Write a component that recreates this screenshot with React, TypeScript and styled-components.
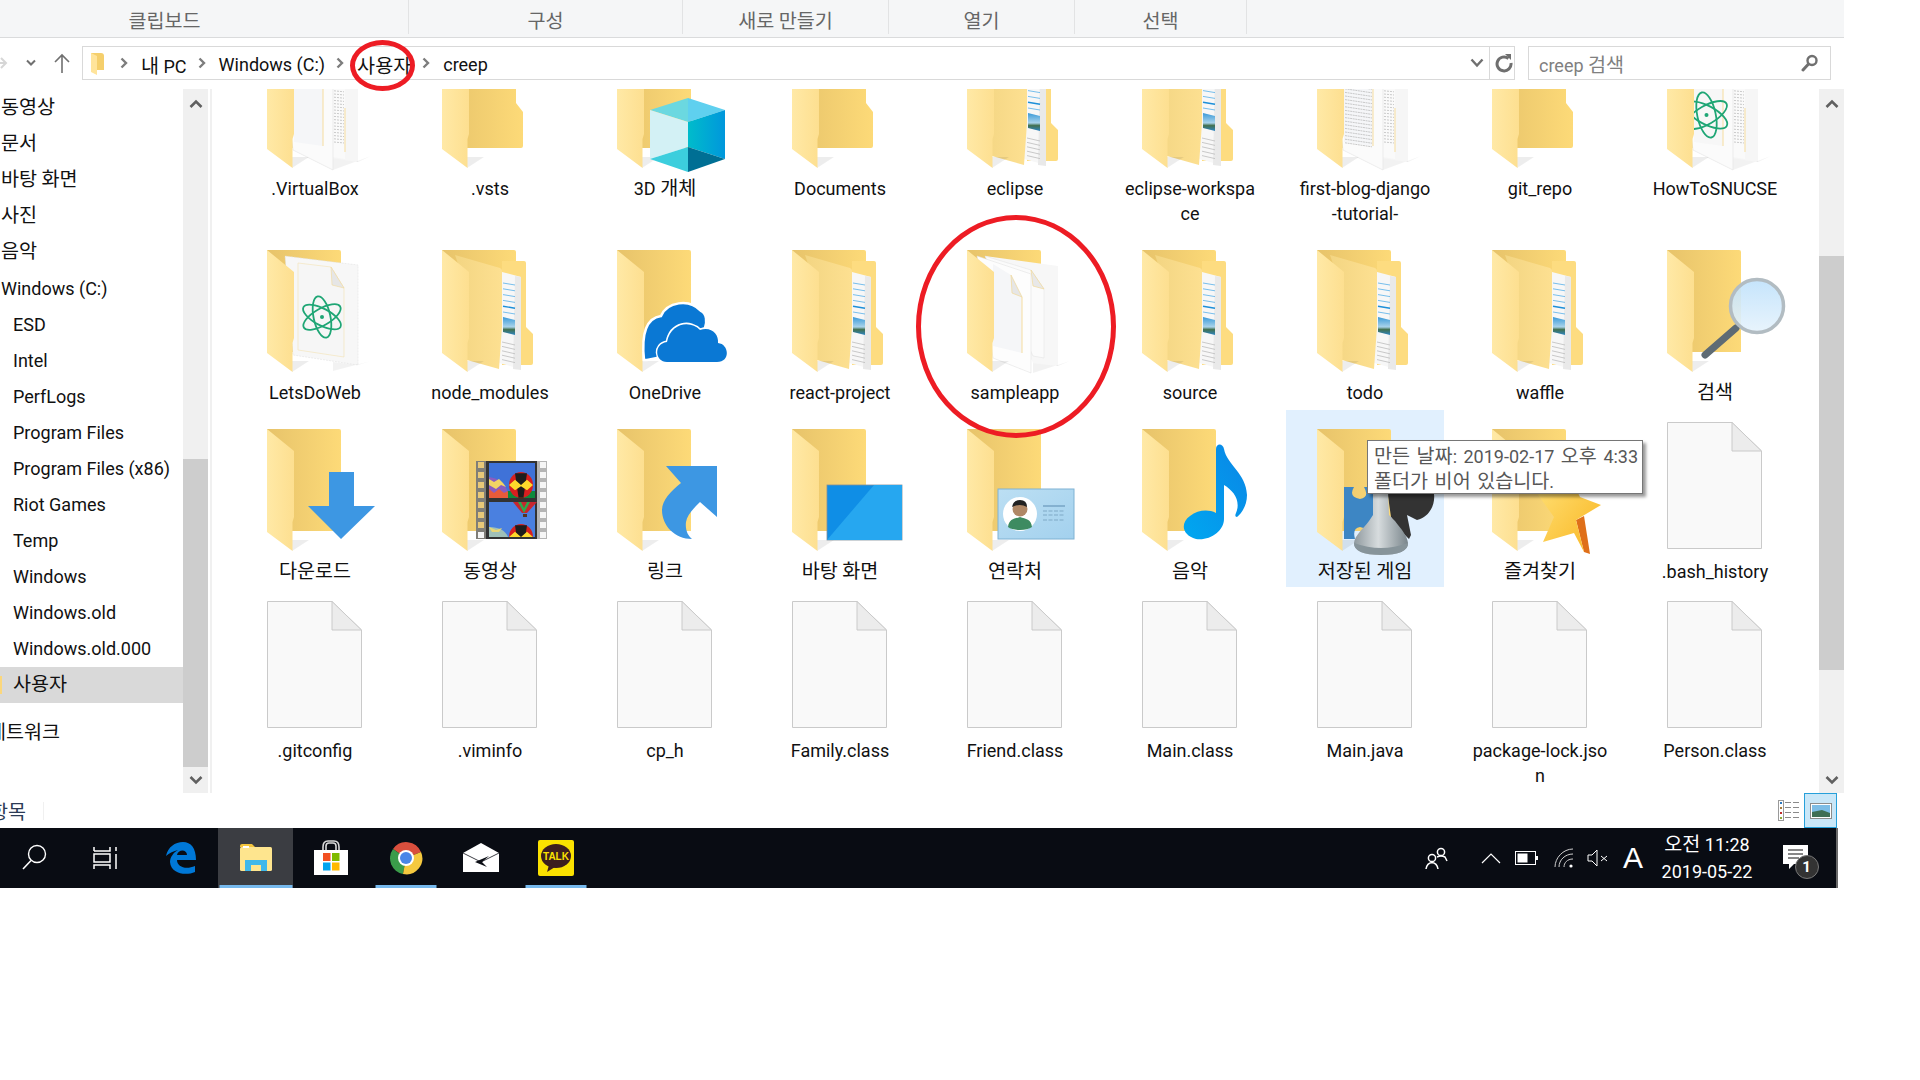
import React from 'react';
import styled, { createGlobalStyle } from 'styled-components';

const GlobalStyle = createGlobalStyle`
	html, body {
		margin: 0;
		padding: 0;
		background: #fff;
		overflow: hidden;
	}
	* {
		box-sizing: border-box;
	}
`;

const FONT = `Roboto, "Noto Sans CJK KR", sans-serif`;

// hangul runs a bit bigger than the latin, like the system font does
const T = ({ children }: { children: string }) => (
	<>
		{children.split(/([\uac00-\ud7a3]+)/).map((part, i) => (i % 2 ? <Ko key={i}>{part}</Ko> : part))}
	</>
);

// folder art, drawn in px relative to the folder's top left corner
const FolderBack = ({ notch }: { notch?: boolean }) =>
	notch ? (
		<path d='M0 0H72Q74 0 74 2V57L81 66V100Q81 102 79 102H0Z' fill='url(#folderBack)' />
	) : (
		<path d='M0 0H72Q74 0 74 2V102H0Z' fill='url(#folderBack)' />
	);

const FolderFront = () => (
	<>
		<path d='M25 122L42 111H25Z' fill='#000' opacity='0.07' />
		<path d='M0 0L27 22V88L25.5 93V122L0 103Z' fill='url(#folderFront)' />
	</>
);

const lines = (n: number, y: number, step: number) => Array.from({ length: n }, (_, i) => y + i * step);

const Atom = ({ x, y, r = 21 }: { x: number; y: number; r?: number }) => (
	<g transform={`translate(${x} ${y})`} fill='none' stroke='#1fa675' strokeWidth='1.8'>
		<ellipse rx={r} ry={r * 0.4} transform='rotate(28)' />
		<ellipse rx={r} ry={r * 0.4} transform='rotate(78)' />
		<ellipse rx={r} ry={r * 0.4} transform='rotate(-30)' />
		<circle r='2' fill='#1fa675' stroke='none' />
	</g>
);

const SheetStack = ({ textual, atom }: { textual?: boolean; atom?: boolean }) => (
	<>
		<path d='M18 6L91 16V116L66 112Z' fill='#f6f6f6' />
		<path d='M91 116L66 112V124L104 110Z' fill='#000' opacity='0.05' />
		<path d='M66 12L78 16V113L66 111Z' fill='#fafafa' />
		{lines(26, 16, 3.2).map((y) => (
			<line key={y} x1='67' x2='77' y1={y} y2={y + 1} stroke='#bdbdbd' strokeWidth='0.8' strokeDasharray='2 1' />
		))}
		<line x1='78' x2='78' y1='62' y2='106' stroke='#f6dd9f' />
		<path d='M14 4L66 22V124L26 104Z' fill='#fbfbfb' stroke='#e3e3e3' strokeWidth='0.6' />
		<path d='M27 8L56 16V100L27 96Z' fill={atom ? '#f7f7f7' : '#f5f6f8'} />
		{textual &&
			lines(24, 14, 3.6).map((y) => (
				<line key={y} x1='28' x2='55' y1={y} y2={y + 4} stroke='#b5b5b5' strokeWidth='0.7' strokeDasharray='2 0.6' />
			))}
		<line x1='56' x2='56' y1='16' y2='100' stroke='#f6dd9f' />
		{atom && <Atom x={39.5} y={69} r={23} />}
	</>
);

const NodeSheet = () => (
	<>
		<path d='M60 11H82Q84 11 84 13V77L91 84V113Q91 115 89 115H60Z' fill='#fddc80' />
		<path d='M60 22L79 27V119L57 113Z' fill='#f7f7f7' />
		<path d='M71 119L79 120V27L73 26Z' fill='#e9e9e9' />
		{lines(6, 33, 5.8).map((y, i) => (
			<line key={y} x1='61' x2='73' y1={y} y2={y + 2} stroke={i === 4 ? '#1d8fd8' : '#69b8ea'} strokeWidth={i === 4 ? 1.4 : 0.9} />
		))}
		<path d='M61 67L73 70V85L61 82Z' fill='url(#landscape)' />
		{lines(5, 92, 4.4).map((y) => (
			<line key={y} x1='60' x2='73' y1={y} y2={y + 3} stroke='#bcbcbc' strokeWidth='0.8' />
		))}
		<path d='M13 5L58 18Q60 19 60 21V77L57 119L25 110V40Z' fill='url(#folderMid)' />
	</>
);

const TwinSheets = () => (
	<>
		<path d='M18 6L91 16V116L66 113Z' fill='#f7f7f7' />
		<path d='M91 116L66 113V123L103 111Z' fill='#000' opacity='0.05' />
		<path d='M18 6L64 20L77 39V108L66 106Z' fill='#fbfbfb' stroke='#e0e0e0' strokeWidth='0.5' />
		<path d='M64 20L77 39L66 36Z' fill='#e8e8e8' stroke='#f1d898' strokeWidth='0.7' />
		<path d='M10 6L64 24V123L26 108Z' fill='#fdfdfd' stroke='#dedede' strokeWidth='0.5' />
		<path d='M26 14L44 25L55 47V103L26 96Z' fill='#f5f6f8' />
		<path d='M44 25L55 47L45 43Z' fill='#e6e6e6' stroke='#f1d898' strokeWidth='0.7' />
		<line x1='55' x2='55' y1='47' y2='103' stroke='#f6dd9f' />
	</>
);

const AtomSheet = () => (
	<>
		<path d='M18 6L91 15V115L26 105Z' fill='#f7f7f7' stroke='#dcdcdc' strokeWidth='0.5' strokeDasharray='2 1' />
		<path d='M91 115L66 112V121L104 111Z' fill='#000' opacity='0.05' />
		<path d='M31 13L64 17L77 38V107L31 100Z' fill='#f6f6f6' stroke='#f3e2b3' strokeWidth='0.6' />
		<path d='M64 17L77 38L65 35Z' fill='#e6e6e6' stroke='#f1d898' strokeWidth='0.6' />
		<Atom x={55} y={67} />
	</>
);

const Cube = () => (
	<>
		<path d='M33 64L71 52V76Z' fill='#6bd8e0' />
		<path d='M71 52L108 64L71 76Z' fill='#5fd0ef' />
		<path d='M33 64L71 76V101L33 113Z' fill='#d3f1f5' />
		<path d='M33 113L71 101V126Z' fill='#3ccedd' />
		<path d='M71 76L108 64V113L71 101Z' fill='url(#cubeSide)' />
		<path d='M71 101L108 113L71 126Z' fill='#006f94' />
	</>
);

const Clouds = () => (
	<>
		<path
			d='M27 110C24 82 30 68 44 66C50 52 72 48 84 61C90 64 90 72 88 78L60 104L30 110Z'
			fill='#0a78d4'
			stroke='#fff'
			strokeWidth='2.5'
		/>
		<path
			d='M50 112C38 112 36 94 50 92C54 72 74 70 83 80C94 76 102 84 101 93C112 94 114 112 100 112Z'
			fill='#0a78d4'
			stroke='#fff'
			strokeWidth='3'
			paintOrder='stroke'
		/>
	</>
);

const Balloon = ({ x, y, rx, ry }: { x: number; y: number; rx: number; ry: number }) => (
	<g transform={`translate(${x} ${y})`}>
		<ellipse rx={rx} ry={ry} fill='#d71f1f' />
		<path d={`M${-rx * 0.5} ${-ry * 0.9}L${-rx * 0.2} ${ry}H${rx * 0.2}L${rx * 0.5} ${-ry * 0.9}Z`} fill='#1d1d1d' />
		<path d={`M${-rx} 0L${-rx * 0.5} ${-ry * 0.4}L0 0L${rx * 0.5} ${-ry * 0.4}L${rx} 0L${rx * 0.5} ${ry * 0.4}L0 ${ry * 0.1}L${-rx * 0.5} ${ry * 0.4}Z`} fill='#fcd92b' />
	</g>
);

const Film = () => (
	<>
		<rect x='34' y='32' width='10' height='78' fill='#807e78' />
		<rect x='95' y='32' width='10' height='78' fill='#b5b5b5' />
		{lines(8, 33, 10).map((y, i) => (
			<React.Fragment key={y}>
				<rect x='36' y={y} width='6' height='6' fill={i === 7 ? '#f4f4f4' : '#e8c878'} />
				<rect x='98' y={y} width='6' height='6' fill='#f6f6f6' />
			</React.Fragment>
		))}
		<rect x='44' y='32' width='51' height='78' fill='#333' />
		<rect x='47' y='34' width='46' height='35' fill='#3f72d8' />
		<rect x='47' y='73' width='46' height='35' fill='#4a80e0' />
		<rect x='47' y='62' width='46' height='7' fill='#0d8a3c' />
		<path d='M47 48Q62 50 66 64V69H47Z' fill='#8a5cc0' />
		<path d='M47 50L52 53L57 50L61 54L64 58L59 56L54 60L47 56Z' fill='#f2d465' />
		<path d='M47 60L52 64L57 60L62 64L66 62V69H47Z' fill='#e85b3a' />
		<Balloon x={79} y={56} rx={12} ry={13} />
		<rect x='77' y='68' width='4' height='2' fill='#4a2a1a' />
		<path d='M71 73H95L85 84H80Z' fill='#c7262e' />
		<path d='M76 73L82 84L88 73L85 73L82 79L79 73Z' fill='#2da84c' />
		<rect x='81' y='85' width='4' height='3' fill='#5a3220' />
		<clipPath id='filmLower'>
			<rect x='47' y='73' width='46' height='35' />
		</clipPath>
		<g clipPath='url(#filmLower)'>
			<Balloon x={79} y={108} rx={12} ry={13} />
			<path d='M47 98Q62 98 66 108H47Z' fill='#9fc0b8' />
			<path d='M47 98L54 101L60 99L57 103L50 103Z' fill='#e8d676' />
		</g>
	</>
);

const Shortcut = () => (
	<path
		d='M49 37H100V88L83 73C76 80 70 86 69 93C68 101 71 107 75 110C58 110 45 97 45 81C45 71 54 62 64 54Z'
		fill='#3d97e3'
	/>
);

const Desktop = () => (
	<>
		<rect x='35' y='56' width='75' height='55' fill='#0f8ee6' stroke='#7f8e99' strokeWidth='0.8' />
		<path d='M35 111L82 56H110V111Z' fill='#26a7f0' />
	</>
);

const Contact = () => (
	<>
		<rect x='31' y='60' width='76' height='50' fill='url(#cardFill)' stroke='#7fb2d3' />
		<circle cx='53' cy='85' r='17' fill='#fff' />
		<path d='M41 98C42 90 47 90 53 88C59 90 64 90 65 98C60 102 46 102 41 98Z' fill='#3d8b61' />
		<circle cx='53' cy='80' r='7.5' fill='#b08866' />
		<path d='M45 78Q46 71 53 71Q60 71 60 78Q53 74 45 78Z' fill='#222' />
		<line x1='76' x2='98' y1='77' y2='77' stroke='#6e9dbe' strokeWidth='1.3' />
		{[82, 86, 91].map((y) => (
			<line key={y} x1='76' x2='98' y1={y} y2={y} stroke='#7fa9c6' strokeDasharray='4 1.5' />
		))}
	</>
);

const Note = () => (
	<path
		d='M74 20C74 14 81 14 82 20C85 36 104 44 105 66C105 76 100 84 95 88C93 88 93 86 94 84C99 72 92 62 82 56V90C82 102 68 112 54 110C40 106 38 94 48 87C56 81 66 80 74 84Z'
		fill='url(#noteFill)'
	/>
);

const Games = () => (
	<>
		<path
			d='M27 58H37Q31 68 43 70Q53 68 47 58H70V110H50Q53 100 43 98Q35 99 38 110H27Z'
			fill='#3d86c4'
		/>
		<path d='M70 60H116C120 72 114 88 100 91L90 86L94 106L92 110L82 100L74 88Z' fill='#333' />
		<path
			d='M56 62H71L72 86L78 92C84 100 90 106 91 114Q91 126 64 126Q37 126 37 114C38 106 46 100 52 92L56 86Z'
			fill='url(#pawn)'
		/>
		<path d='M37 114Q64 124 91 114Q91 126 64 126Q37 126 37 114Z' fill='#87949a' />
	</>
);

const Star = () => (
	<>
		<path d='M84 91L92 87L98 125L92 123Z' fill='#df6f19' />
		<path d='M46 66L76 44L88 68L109 76L84 91L92 123L82 104L51 113L62 88Z' fill='url(#starFill)' />
	</>
);

const Magnifier = () => (
	<>
		<line x1='69' y1='78' x2='38' y2='105' stroke='#5e6b74' strokeWidth='7' strokeLinecap='round' />
		<circle cx='90' cy='56' r='26.5' fill='url(#glassFill)' fillOpacity='0.9' stroke='#b2bcc2' strokeWidth='3.5' />
	</>
);

type FolderKind =
	| 'plain'
	| 'vbox'
	| 'text'
	| 'howto'
	| 'node'
	| 'atom'
	| 'twin'
	| 'cube'
	| 'cloud'
	| 'down'
	| 'film'
	| 'link'
	| 'desktop'
	| 'contact'
	| 'note'
	| 'games'
	| 'star'
	| 'search';

const behind: Partial<Record<FolderKind, React.ReactNode>> = {
	vbox: <SheetStack />,
	text: <SheetStack textual />,
	howto: <SheetStack atom />,
	node: <NodeSheet />,
	atom: <AtomSheet />,
	twin: <TwinSheets />,
};

const over: Partial<Record<FolderKind, React.ReactNode>> = {
	cube: <Cube />,
	cloud: <Clouds />,
	down: <path d='M62 43H87V77H108L74 110L41 77H62Z' fill='#3d97e3' />,
	film: <Film />,
	link: <Shortcut />,
	desktop: <Desktop />,
	contact: <Contact />,
	note: <Note />,
	games: <Games />,
	star: <Star />,
	search: <Magnifier />,
};

const FolderIcon = ({ kind }: { kind: FolderKind }) => (
	<IconSvg viewBox='0 0 158 149'>
		<g transform='translate(31 19)'>
			<FolderBack notch={kind === 'plain'} />
			{behind[kind]}
			<FolderFront />
			{over[kind]}
		</g>
	</IconSvg>
);

const FileIcon = () => (
	<IconSvg viewBox='0 0 158 149'>
		<path d='M31.5 12.5H96L125.5 41V138.5H31.5Z' fill='#f9f9f9' stroke='#cacaca' />
		<path d='M96 12.5L125.5 41H96Z' fill='#ececec' stroke='#cacaca' />
	</IconSvg>
);

type Item = { name: string; kind?: FolderKind; selected?: boolean };

const items: Item[] = [
	{ name: '.VirtualBox', kind: 'vbox' },
	{ name: '.vsts', kind: 'plain' },
	{ name: '3D 개체', kind: 'cube' },
	{ name: 'Documents', kind: 'plain' },
	{ name: 'eclipse', kind: 'node' },
	{ name: 'eclipse-workspa\nce', kind: 'node' },
	{ name: 'first-blog-django\n-tutorial-', kind: 'text' },
	{ name: 'git_repo', kind: 'plain' },
	{ name: 'HowToSNUCSE', kind: 'howto' },
	{ name: 'LetsDoWeb', kind: 'atom' },
	{ name: 'node_modules', kind: 'node' },
	{ name: 'OneDrive', kind: 'cloud' },
	{ name: 'react-project', kind: 'node' },
	{ name: 'sampleapp', kind: 'twin' },
	{ name: 'source', kind: 'node' },
	{ name: 'todo', kind: 'node' },
	{ name: 'waffle', kind: 'node' },
	{ name: '검색', kind: 'search' },
	{ name: '다운로드', kind: 'down' },
	{ name: '동영상', kind: 'film' },
	{ name: '링크', kind: 'link' },
	{ name: '바탕 화면', kind: 'desktop' },
	{ name: '연락처', kind: 'contact' },
	{ name: '음악', kind: 'note' },
	{ name: '저장된 게임', kind: 'games', selected: true },
	{ name: '즐겨찾기', kind: 'star' },
	{ name: '.bash_history' },
	{ name: '.gitconfig' },
	{ name: '.viminfo' },
	{ name: 'cp_h' },
	{ name: 'Family.class' },
	{ name: 'Friend.class' },
	{ name: 'Main.class' },
	{ name: 'Main.java' },
	{ name: 'package-lock.jso\nn' },
	{ name: 'Person.class' },
];

type NavItem = { name: string; indent?: number; gap?: number; active?: boolean };

const navItems: NavItem[] = [
	{ name: '동영상', indent: 1 },
	{ name: '문서', indent: 1 },
	{ name: '바탕 화면', indent: 1 },
	{ name: '사진', indent: 1 },
	{ name: '음악', indent: 1 },
	{ name: 'Windows (C:)', indent: 1, gap: 1 },
	{ name: 'ESD', indent: 13 },
	{ name: 'Intel', indent: 13 },
	{ name: 'PerfLogs', indent: 13 },
	{ name: 'Program Files', indent: 13 },
	{ name: 'Program Files (x86)', indent: 13 },
	{ name: 'Riot Games', indent: 13 },
	{ name: 'Temp', indent: 13 },
	{ name: 'Windows', indent: 13 },
	{ name: 'Windows.old', indent: 13 },
	{ name: 'Windows.old.000', indent: 13 },
	{ name: '사용자', indent: 13, active: true },
	{ name: '네트워크', indent: -12, gap: 12 },
];

const ribbonGroups = [
	{ label: '클립보드', width: 488 },
	{ label: '구성', width: 274 },
	{ label: '새로 만들기', width: 206 },
	{ label: '열기', width: 186 },
	{ label: '선택', width: 172 },
];

const crumbs = ['내 PC', 'Windows (C:)', '사용자', 'creep'];

const Chevron = ({ up }: { up?: boolean }) => (
	<ScrollArrow viewBox='0 0 14 10'>
		<path d={up ? 'M1.5 8L7 2.5L12.5 8' : 'M1.5 2L7 7.5L12.5 2'} fill='none' stroke='#606060' strokeWidth='2.6' />
	</ScrollArrow>
);

const App = () => {
	return (
		<Screen>
			<GlobalStyle />
			<SvgDefs aria-hidden='true'>
				<defs>
					<linearGradient id='folderBack' x1='0' x2='1' y1='0' y2='0'>
						<stop offset='0' stopColor='#e7c36a' />
						<stop offset='1' stopColor='#fdda78' />
					</linearGradient>
					<linearGradient id='folderFront' x1='0' x2='1' y1='0' y2='0'>
						<stop offset='0' stopColor='#ffe9a6' />
						<stop offset='1' stopColor='#fddf90' />
					</linearGradient>
					<linearGradient id='folderMid' x1='0' x2='1' y1='0' y2='0'>
						<stop offset='0' stopColor='#f3d582' />
						<stop offset='1' stopColor='#fde091' />
					</linearGradient>
					<linearGradient id='landscape' x1='0' x2='0' y1='0' y2='1'>
						<stop offset='0' stopColor='#3b9ad8' />
						<stop offset='0.55' stopColor='#a9d3ea' />
						<stop offset='0.7' stopColor='#41704f' />
						<stop offset='1' stopColor='#2f86c4' />
					</linearGradient>
					<linearGradient id='cubeSide' x1='0' x2='1' y1='0' y2='0'>
						<stop offset='0' stopColor='#00bccb' />
						<stop offset='1' stopColor='#0097dc' />
					</linearGradient>
					<linearGradient id='cardFill' x1='0' x2='1' y1='0' y2='1'>
						<stop offset='0' stopColor='#bcdff3' />
						<stop offset='1' stopColor='#a3d1ee' />
					</linearGradient>
					<linearGradient id='noteFill' x1='0' x2='1' y1='1' y2='0'>
						<stop offset='0' stopColor='#00a7f0' />
						<stop offset='1' stopColor='#0a86e6' />
					</linearGradient>
					<linearGradient id='pawn' x1='0' x2='1' y1='0' y2='0'>
						<stop offset='0' stopColor='#8f999e' />
						<stop offset='0.45' stopColor='#d7dcde' />
						<stop offset='1' stopColor='#79858b' />
					</linearGradient>
					<linearGradient id='starFill' x1='0' x2='1' y1='0' y2='1'>
						<stop offset='0' stopColor='#ffe27a' />
						<stop offset='1' stopColor='#f9b51f' />
					</linearGradient>
					<linearGradient id='glassFill' x1='0' x2='0' y1='0' y2='1'>
						<stop offset='0' stopColor='#bfe1fb' />
						<stop offset='1' stopColor='#e6f3fc' />
					</linearGradient>
				</defs>
			</SvgDefs>

			<Explorer>
				<Ribbon>
					{ribbonGroups.map((group) => (
						<RibbonGroup key={group.label} $width={group.width}>
							<T>{group.label}</T>
						</RibbonGroup>
					))}
				</Ribbon>

				<AddressRow>
					<NavButtons>
						<svg width='8' height='14' viewBox='0 0 8 14'>
							<path d='M0 7H5M1 2L6 7L1 12' fill='none' stroke='#d6d6d6' strokeWidth='2' />
						</svg>
						<svg width='12' height='8' viewBox='0 0 12 8'>
							<path d='M2 1.5L6 5.5L10 1.5' fill='none' stroke='#707070' strokeWidth='2' />
						</svg>
						<svg width='16' height='20' viewBox='0 0 16 20'>
							<path d='M8 20V2M1 9L8 2L15 9' fill='none' stroke='#707070' strokeWidth='1.6' />
						</svg>
					</NavButtons>
					<AddressBox>
						<AddressFolder width='14' height='24' viewBox='0 0 14 24'>
							<path d='M0 2H10Q13 2 13 5V19H0Z' fill='#f5cf6c' />
							<path d='M0 2L6 5V24L0 21Z' fill='#ffe49b' />
						</AddressFolder>
						{crumbs.map((crumb) => (
							<React.Fragment key={crumb}>
								<CrumbArrow viewBox='0 0 8 12'>
									<path d='M1.5 1.5L6 6L1.5 10.5' fill='none' stroke='#7d7d7d' strokeWidth='2.4' />
								</CrumbArrow>
								<Crumb>
									<T>{crumb}</T>
								</Crumb>
							</React.Fragment>
						))}
						<AddressEnd>
							<svg width='14' height='10' viewBox='0 0 14 10'>
								<path d='M1.5 1.5L7 7.5L12.5 1.5' fill='none' stroke='#707070' strokeWidth='2.4' />
							</svg>
						</AddressEnd>
						<RefreshButton>
							<svg width='18' height='20' viewBox='0 0 18 20'>
								<path d='M13.5 5.5A7 7 0 1 0 16 10' fill='none' stroke='#6f6f6f' strokeWidth='3' />
								<path d='M10 1H16V7Z' fill='#6f6f6f' />
							</svg>
						</RefreshButton>
					</AddressBox>
					<SearchBox>
						<span>
							<T>creep 검색</T>
						</span>
						<svg width='18' height='18' viewBox='0 0 18 18'>
							<circle cx='11' cy='6.5' r='4.5' fill='none' stroke='#707070' strokeWidth='2.4' />
							<line x1='7.5' y1='10' x2='2' y2='16' stroke='#707070' strokeWidth='3' strokeLinecap='round' />
						</svg>
					</SearchBox>
				</AddressRow>

				<Main>
					<Sidebar>
						{navItems.map((item) => (
							<NavRow key={item.name} $indent={item.indent} $gap={item.gap} $active={item.active}>
								<T>{item.name}</T>
							</NavRow>
						))}
					</Sidebar>
					<ScrollTrack $thumbTop={370} $thumbHeight={308}>
						<Chevron up />
						<Chevron />
					</ScrollTrack>
					<Pane>
						<Grid>
							{items.map((item) => (
								<Cell key={item.name} $selected={item.selected}>
									{item.kind ? <FolderIcon kind={item.kind} /> : <FileIcon />}
									<Label>
										<T>{item.name}</T>
									</Label>
								</Cell>
							))}
						</Grid>
						<Tooltip>
							<T>만든 날짜: 2019-02-17 오후 4:33</T>
							<br />
							<T>폴더가 비어 있습니다.</T>
						</Tooltip>
					</Pane>
					<ScrollTrack $thumbTop={167} $thumbHeight={414}>
						<Chevron up />
						<Chevron />
					</ScrollTrack>
				</Main>

				<StatusBar>
					<StatusText>
						<T>항목</T>
					</StatusText>
					<StatusDivider />
					<ViewButtons>
						<ViewButton>
							<svg width='21' height='21' viewBox='0 0 21 21'>
								<rect x='0.5' y='0.5' width='5' height='20' fill='#fff' stroke='#9a9a9a' />
								<rect x='2' y='2' width='2' height='2' fill='#2a78c0' />
								<rect x='2' y='7' width='2' height='2' fill='#a67c3d' />
								<rect x='2' y='12' width='2' height='2' fill='#c02a2a' />
								<rect x='2' y='17' width='2' height='2' fill='#8fa83a' />
								{[2.5, 7.5, 12.5, 17.5].map((y) => (
									<line key={y} x1='7' x2='21' y1={y} y2={y} stroke='#8a8a8a' strokeWidth='1' strokeDasharray='6 2' />
								))}
							</svg>
						</ViewButton>
						<ViewButton $active>
							<svg width='22' height='16' viewBox='0 0 22 16'>
								<rect x='0.5' y='0.5' width='21' height='15' fill='#fff' stroke='#8c8c8c' />
								<rect x='2' y='2' width='18' height='12' fill='#7dbde6' />
								<path d='M2 9L12 7L20 10V14H2Z' fill='#3f6f55' />
							</svg>
						</ViewButton>
					</ViewButtons>
				</StatusBar>
			</Explorer>

			<Taskbar>
				<TaskGroup>
					<TaskButton $width={68}>
						<svg width='30' height='30' viewBox='0 0 30 30'>
							<circle cx='18' cy='11' r='8.5' fill='none' stroke='#fff' strokeWidth='1.4' />
							<line x1='12' y1='17.5' x2='4' y2='26' stroke='#fff' strokeWidth='1.6' />
						</svg>
					</TaskButton>
					<TaskButton>
						<svg width='26' height='24' viewBox='0 0 26 24'>
							<path d='M1 5V1M1 5H17V1M1 8H17V16H1ZM1 23V19H17V23' fill='none' stroke='#fff' strokeWidth='1.5' />
							<path d='M23 1V5M23 8V23' fill='none' stroke='#fff' strokeWidth='1.5' />
						</svg>
					</TaskButton>
					<TaskButton>
						<svg width='30' height='32' viewBox='0 0 30 32'>
							<path
								fillRule='evenodd'
								d='M0 14C2 5 9 0 17 0C25 0 30 6 30 18H11C11 25 20 28 29 24V30C20 34 5 32 4 20C4 15 8 10 12 8C8 9 3 11 0 14ZM11 13H21C21 7 12 7 11 13Z'
								fill='#0078d7'
							/>
						</svg>
					</TaskButton>
					<TaskButton $active $marker={73}>
						<svg width='32' height='28' viewBox='0 0 32 28'>
							<path d='M0 2Q0 0 2 0H12L15 3H0Z' fill='#f4c53d' />
							<rect x='0' y='3' width='32' height='24' rx='1.5' fill='#fee58e' />
							<rect x='3' y='2' width='6' height='2' fill='#fff' />
							<path d='M5 27V16H27V27H21V21H11V27Z' fill='#3fb8ea' />
						</svg>
					</TaskButton>
					<TaskButton>
						<svg width='36' height='36' viewBox='0 0 36 36'>
							<path d='M10 10V7Q10 1 15 1H21Q26 1 26 7V10M13 10V6Q13 3 16 3H20Q23 3 23 6V10' fill='none' stroke='#d9d9d9' strokeWidth='1.6' />
							<path d='M1 10H35V35H1Z' fill='#fff' />
							<rect x='10' y='13' width='7.5' height='8' fill='#f25022' />
							<rect x='19' y='13' width='7.5' height='8' fill='#7fba00' />
							<rect x='10' y='22.5' width='7.5' height='8' fill='#00a4ef' />
							<rect x='19' y='22.5' width='7.5' height='8' fill='#ffb900' />
						</svg>
					</TaskButton>
					<TaskButton $marker={61}>
						<svg width='34' height='34' viewBox='0 0 34 34'>
							<path d='M17 17L4 8A16 16 0 0 1 32 11Z' fill='#d94f3d' />
							<path d='M17 17L4 8A16 16 0 0 0 14 33Z' fill='#3a9c4a' />
							<path d='M17 17L32 11A16 16 0 0 1 14 33Z' fill='#f5c93f' />
							<circle cx='17' cy='17' r='8' fill='#fff' />
							<circle cx='17' cy='17' r='6' fill='#4a86e8' />
						</svg>
					</TaskButton>
					<TaskButton>
						<svg width='36' height='30' viewBox='0 0 36 30'>
							<path d='M18 0L36 10V29H0V10Z' fill='#fff' />
							<path d='M0 10L18 19L36 10' fill='none' stroke='#0a0d14' strokeWidth='0.8' />
							<path d='M26 13L12 19L24 24L19 19Z' fill='#0a0d14' />
						</svg>
					</TaskButton>
					<TaskButton $marker={61}>
						<svg width='36' height='36' viewBox='0 0 36 36'>
							<rect width='36' height='36' rx='2' fill='#fae100' />
							<ellipse cx='18' cy='16' rx='15' ry='12' fill='#3c1e1e' />
							<path d='M11 25L9 32L17 27Z' fill='#3c1e1e' />
							<text x='18' y='20' textAnchor='middle' fontFamily='"Liberation Sans", sans-serif' fontWeight='700' fontSize='10' fill='#fae100'>
								TALK
							</text>
						</svg>
					</TaskButton>
				</TaskGroup>

				<Tray>
					<TrayItem $width={64}>
						<svg width='24' height='24' viewBox='0 0 24 24' fill='none' stroke='#fff' strokeWidth='1.5'>
							<circle cx='16' cy='6' r='3.6' />
							<path d='M12 11Q16 9 20 11L22 15' />
							<circle cx='7' cy='12' r='3.6' />
							<path d='M1 23Q2 17 7 16.5Q12 17 13 23' />
						</svg>
					</TrayItem>
					<TrayItem $width={44}>
						<svg width='20' height='11' viewBox='0 0 20 11'>
							<path d='M1 10L10 1L19 10' fill='none' stroke='#fff' strokeWidth='1.2' />
						</svg>
					</TrayItem>
					<TrayItem $width={28}>
						<svg width='24' height='14' viewBox='0 0 24 14'>
							<rect x='0.5' y='0.5' width='20' height='13' fill='none' stroke='#fff' />
							<rect x='2.5' y='2.5' width='10' height='9' fill='#fff' />
							<rect x='21' y='5' width='2' height='4' fill='#fff' />
						</svg>
					</TrayItem>
					<TrayItem $width={46}>
						<svg width='20' height='20' viewBox='0 0 20 20' fill='none' stroke='#cfcfcf' strokeWidth='1'>
							<path d='M1 19C1 10 9 1 19 1' />
							<path d='M5 19C5 12 11 6 19 6' />
							<path d='M10 19C10 15 13 11 19 11' />
							<circle cx='17' cy='18' r='1.6' fill='#fff' stroke='none' />
						</svg>
					</TrayItem>
					<TrayItem $width={22}>
						<svg width='22' height='18' viewBox='0 0 22 18' fill='none' stroke='#fff' strokeWidth='1'>
							<path d='M1 6H5L10 1V17L5 12H1Z' />
							<path d='M14 7L20 12M20 7L14 12' />
						</svg>
					</TrayItem>
					<TrayLetter $width={48}>A</TrayLetter>
					<Clock>
						<span>
							<T>오전 11:28</T>
						</span>
						<span>2019-05-22</span>
					</Clock>
					<TrayItem $width={76}>
						<NoticeWrap>
							<svg width='25' height='24' viewBox='0 0 25 24'>
								<path d='M0 0H25V19H11L6 24V19H0Z' fill='#fff' />
								<path d='M5 5H20M5 9H20M5 13H16' stroke='#111' strokeWidth='1.2' />
							</svg>
							<NoticeBadge>1</NoticeBadge>
						</NoticeWrap>
					</TrayItem>
				</Tray>
			</Taskbar>

			<RedCircle $x={350} $y={40} $w={65} $h={51} />
			<RedCircle $x={916} $y={215} $w={200} $h={223} />
		</Screen>
	);
};

const Screen = styled.div`
	position: relative;
	width: 1920px;
	height: 1080px;
	overflow: hidden;
	background: #fff;

	color: #111;
	font-family: ${FONT};
	font-size: 18px;
`;

const Ko = styled.span`
	font-size: 1.09em;
`;

const SvgDefs = styled.svg`
	position: absolute;
	width: 0;
	height: 0;
`;

const Explorer = styled.div`
	width: 1844px;
	height: 828px;

	display: flex;
	flex-direction: column;
`;

const Ribbon = styled.div`
	height: 38px;
	flex: none;

	background: #f5f6f7;
	border-bottom: 1px solid #dadbdc;

	display: flex;
	align-items: flex-start;
	overflow: hidden;
`;

const RibbonGroup = styled.div<{ $width: number }>`
	width: ${(p) => p.$width}px;
	height: 34px;
	flex: none;

	color: #666;
	line-height: 43px;
	text-align: center;

	border-right: 1px solid #e2e3e4;

	&:first-child {
		margin-left: -79px;
	}
`;

const AddressRow = styled.div`
	height: 51px;
	flex: none;
	padding-top: 8px;

	display: flex;
	align-items: flex-start;
`;

const NavButtons = styled.div`
	width: 82px;
	height: 34px;
	flex: none;
	padding-right: 12px;

	display: flex;
	align-items: center;
	justify-content: space-between;
`;

const AddressBox = styled.div`
	width: 1433px;
	height: 34px;
	flex: none;
	padding-left: 8px;

	background: #fff;
	border: 1px solid #d9d9d9;

	display: flex;
	align-items: center;
`;

const AddressFolder = styled.svg`
	flex: none;
	margin-right: 4px;
`;

const CrumbArrow = styled.svg`
	width: 8px;
	height: 12px;
	flex: none;
	margin: 0 13px 0 11px;
`;

const Crumb = styled.span`
	padding-top: 2px;

	color: #111;
	white-space: nowrap;
`;

const AddressEnd = styled.div`
	margin-left: auto;
	width: 24px;

	display: flex;
	align-items: center;
	justify-content: center;
`;

const RefreshButton = styled.div`
	width: 25px;
	height: 100%;
	padding-left: 3px;

	border-left: 1px solid #d9d9d9;

	display: flex;
	align-items: center;
	justify-content: center;
`;

const SearchBox = styled.div`
	width: 303px;
	height: 34px;
	flex: none;
	margin-left: 13px;
	padding: 0 11px 0 10px;

	color: #808080;
	border: 1px solid #d9d9d9;

	display: flex;
	align-items: center;
	justify-content: space-between;
`;

const Main = styled.div`
	height: 704px;
	flex: none;

	display: flex;
`;

const Sidebar = styled.div`
	width: 183px;
	flex: none;
	padding-top: 1px;
	overflow: hidden;
`;

const NavRow = styled.div<{ $indent?: number; $gap?: number; $active?: boolean }>`
	position: relative;
	height: 36px;
	margin-top: ${(p) => p.$gap ?? 0}px;
	text-indent: ${(p) => p.$indent ?? 0}px;

	background: ${(p) => (p.$active ? '#d9d9d9' : 'transparent')};
	line-height: 36px;
	white-space: nowrap;

	&::before {
		content: '';
		display: ${(p) => (p.$active ? 'block' : 'none')};
		position: absolute;
		top: 9px;
		left: 0;
		width: 2px;
		height: 18px;
		background: #fbd77c;
	}
`;

const ScrollTrack = styled.div<{ $thumbTop: number; $thumbHeight: number }>`
	position: relative;
	width: 25px;
	flex: none;
	padding: 10px 0 8px;

	background: #f0f0f0;

	display: flex;
	flex-direction: column;
	align-items: center;
	justify-content: space-between;

	&::before {
		content: '';
		position: absolute;
		top: ${(p) => p.$thumbTop}px;
		left: 0;
		right: 0;
		height: ${(p) => p.$thumbHeight}px;
		background: #cdcdcd;
	}
`;

const ScrollArrow = styled.svg`
	position: relative;
	width: 14px;
	height: 10px;
`;

const Pane = styled.div`
	position: relative;
	flex: 1;
	margin-left: 2px;
	padding-left: 24px;
	overflow: hidden;

	border-left: 2px solid #f0f0f0;
`;

// the list is scrolled, the first row is cut off at the top of the pane
const Grid = styled.div`
	margin-top: -62px;

	display: grid;
	grid-template-columns: repeat(9, 158px);
	grid-template-rows: 202px;
	column-gap: 17px;
	row-gap: 2px;
	align-items: start;
`;

const Cell = styled.div<{ $selected?: boolean }>`
	min-height: 177px;
	background: ${(p) => (p.$selected ? '#e1f0fe' : 'transparent')};

	display: flex;
	flex-direction: column;
	align-items: center;
`;

const IconSvg = styled.svg`
	width: 158px;
	height: 149px;
	flex: none;
	overflow: visible;
`;

const Label = styled.div`
	width: 100%;

	color: #111;
	line-height: 25px;
	text-align: center;
	white-space: pre-line;
`;

const Tooltip = styled.div`
	position: absolute;
	top: 351px;
	left: 1155px;
	width: 276px;
	height: 54px;
	padding: 3px 6px 0;

	color: #575757;
	background: #fff;
	line-height: 25px;
	white-space: nowrap;
	word-spacing: 2px;

	border: 1px solid #767676;
	box-shadow: 3px 3px 3px rgba(0, 0, 0, 0.4);
`;

const StatusBar = styled.div`
	height: 35px;
	flex: none;

	display: flex;
	align-items: center;
`;

const StatusText = styled.div`
	width: 43px;
	text-indent: -10px;
	flex: none;

	color: #2b3a55;
`;

const StatusDivider = styled.div`
	width: 1px;
	height: 18px;
	background: #f0f0f0;
`;

const ViewButtons = styled.div`
	height: 100%;
	margin-left: auto;
	margin-right: 7px;

	display: flex;
	align-items: center;
`;

const ViewButton = styled.div<{ $active?: boolean }>`
	width: ${(p) => (p.$active ? 33 : 32)}px;
	height: 35px;

	background: ${(p) => (p.$active ? '#c9e7f8' : 'transparent')};
	border: ${(p) => (p.$active ? '1px solid #26a0da' : 'none')};

	display: flex;
	align-items: center;
	justify-content: center;
`;

const Taskbar = styled.div`
	width: 1838px;
	height: 60px;

	color: #fff;
	background: #090c13;
	border-right: 2px solid #6a6a6a;

	display: flex;
	align-items: stretch;
`;

const TaskGroup = styled.div`
	display: flex;
`;

const TaskButton = styled.div<{ $width?: number; $active?: boolean; $marker?: number }>`
	position: relative;
	width: ${(p) => p.$width ?? 75}px;

	background: ${(p) => (p.$active ? '#3b3d42' : 'transparent')};

	display: flex;
	align-items: center;
	justify-content: center;

	&::after {
		content: '';
		display: ${(p) => (p.$marker ? 'block' : 'none')};
		position: absolute;
		bottom: 0;
		left: 50%;
		width: ${(p) => p.$marker}px;
		height: 3px;
		transform: translateX(-50%);
		background: #76b9ed;
	}
`;

const Tray = styled.div`
	margin-left: auto;
	padding-right: 3px;

	display: flex;
	align-items: stretch;
`;

const TrayItem = styled.div<{ $width: number }>`
	width: ${(p) => p.$width}px;

	display: flex;
	align-items: center;
	justify-content: center;
`;

const TrayLetter = styled(TrayItem)`
	font-family: 'Liberation Sans', sans-serif;
	font-size: 30px;
`;

const Clock = styled.div`
	width: 100px;

	font-size: 18px;
	line-height: 27px;
	white-space: nowrap;

	display: flex;
	flex-direction: column;
	align-items: center;
	justify-content: center;
`;

const NoticeWrap = styled.div`
	position: relative;
	width: 25px;
	height: 24px;
	margin-top: -3px;
`;

const NoticeBadge = styled.div`
	position: absolute;
	top: 10px;
	left: 12px;
	width: 24px;
	height: 24px;

	color: #fff;
	background: #333;
	font-size: 15px;
	font-weight: 700;
	line-height: 22px;
	text-align: center;

	border: 1px solid #777;
	border-radius: 50%;
`;

const RedCircle = styled.div<{ $x: number; $y: number; $w: number; $h: number }>`
	position: absolute;
	top: ${(p) => p.$y}px;
	left: ${(p) => p.$x}px;
	width: ${(p) => p.$w}px;
	height: ${(p) => p.$h}px;

	border: 5px solid #ed1c24;
	border-radius: 50%;
`;

export default App;
